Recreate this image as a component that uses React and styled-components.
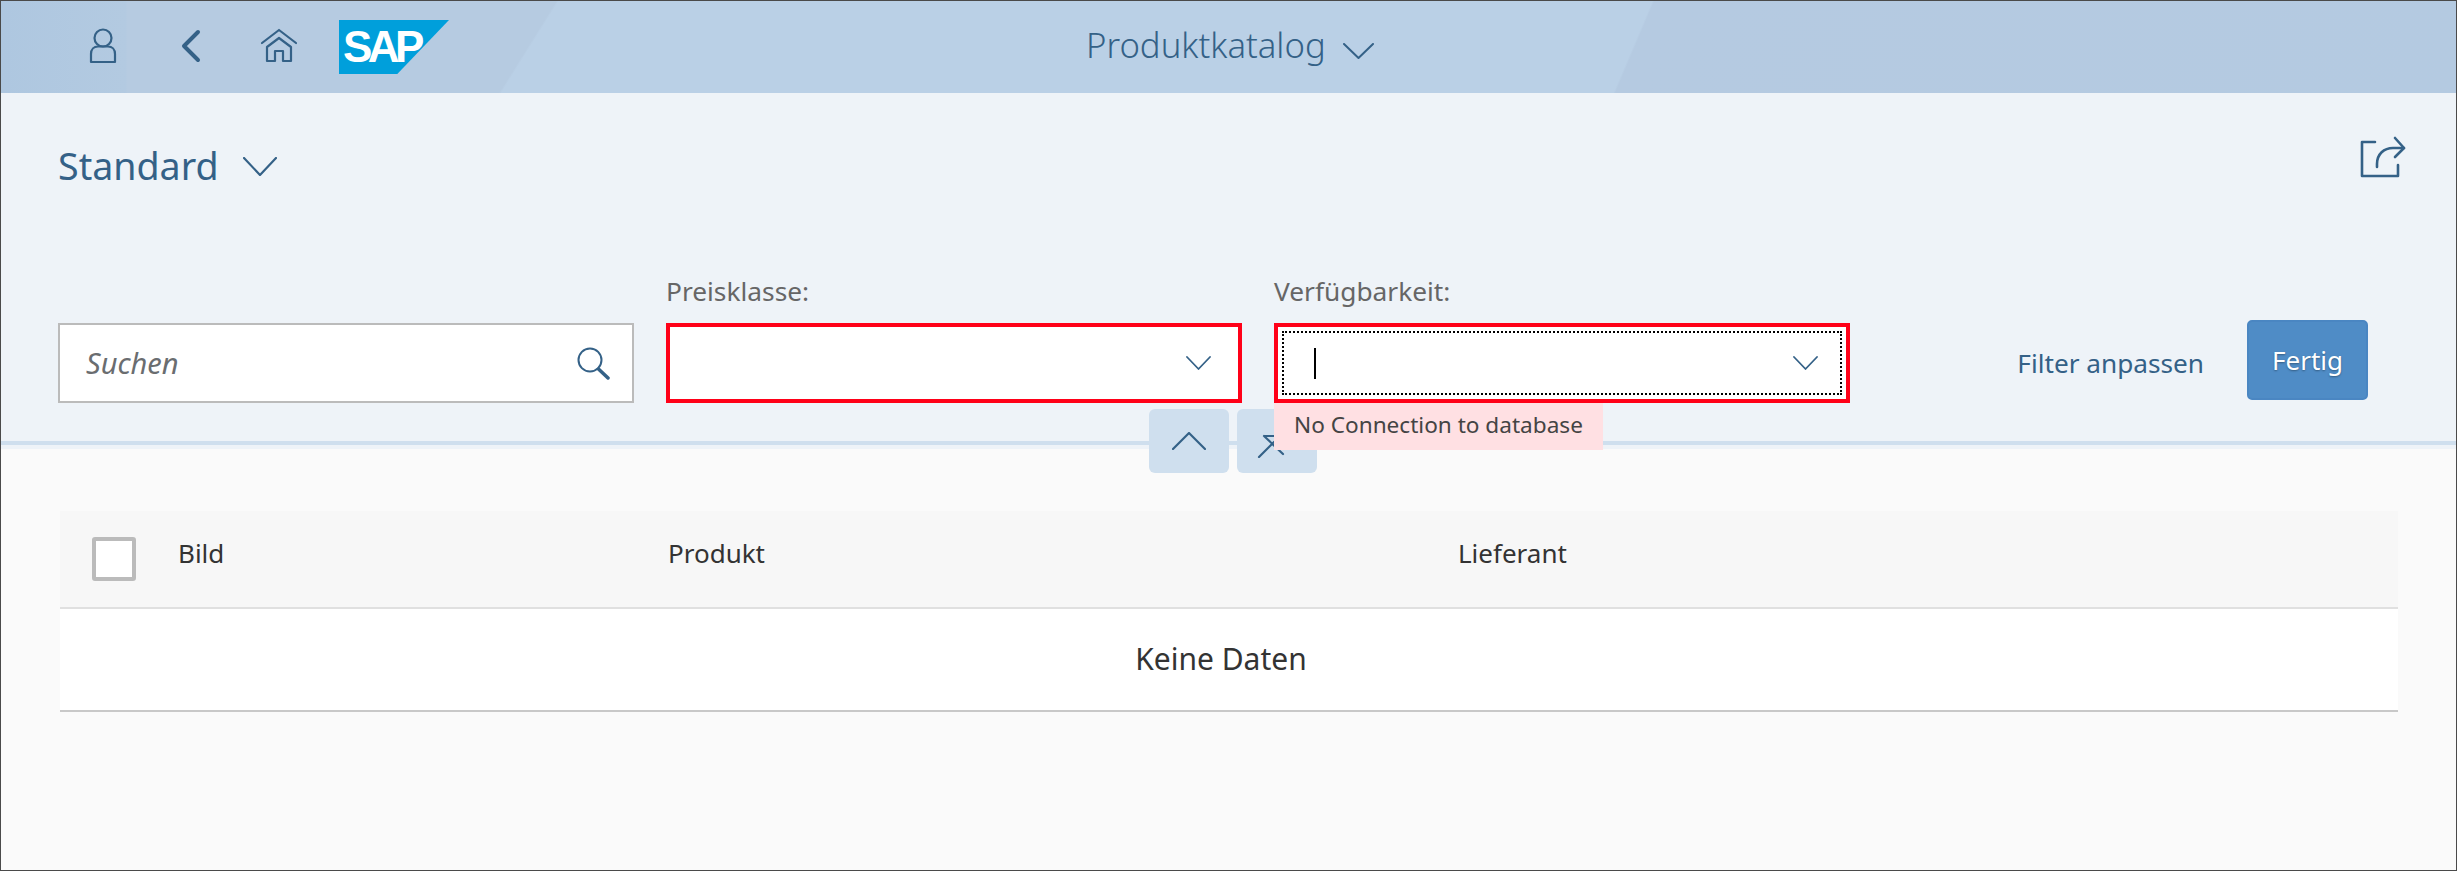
import React from 'react'
import styled, { createGlobalStyle } from 'styled-components'

const GlobalStyle = createGlobalStyle`
  html, body { margin: 0; padding: 0; background: #fafafa; }
  * { box-sizing: border-box; }
`

const Page = styled.div`
  width: 2457px;
  height: 871px;
  border: 1px solid #4a4a4a;
  background: #fafafa;
  font-family: "Noto Sans", "Open Sans", sans-serif;
  overflow: hidden;
  display: flex;
  flex-direction: column;
`

const Shell = styled.header`
  height: 92px;
  flex: none;
  position: relative;
  display: flex;
  align-items: center;
  padding-left: 87px;
  background:
    linear-gradient(90deg, #aec7e0 0, #b3cae1 125px, transparent 126px),
    linear-gradient(113deg, transparent 1520px, #b5cae1 1522px, #b4cae1 100%),
    linear-gradient(122deg, #b6cbe1 471px, #bad0e6 473px, #bad0e6 100%);
`

const ShellIcon = styled.svg`
  display: block;
  flex: none;
  fill: none;
  stroke: #346187;
  stroke-width: ${p => p.$weight || 2.2};
  stroke-linecap: round;
  stroke-linejoin: round;
  transform: ${p => (p.$up ? 'scaleY(-1)' : 'none')};
`

const ShellIcons = styled.div`
  display: flex;
  align-items: center;
  margin-top: -3px;
`

const BackIcon = styled(ShellIcon)`
  margin-left: 62px;
`

const HomeIcon = styled(ShellIcon)`
  margin-left: 58px;
`

const Logo = styled.div`
  width: 110px;
  height: 54px;
  margin-left: 41px;
  flex: none;
  background: #009fdb;
  clip-path: polygon(0 0, 100% 0, 53% 100%, 0 100%);
  color: #fff;
  font-family: "Liberation Sans", Arial, sans-serif;
  font-weight: 700;
  font-size: 44px;
  line-height: 54px;
  letter-spacing: -4.5px;
  padding-left: 4px;
`

const ShellTitle = styled.div`
  position: absolute;
  left: 1085px;
  top: 0;
  height: 92px;
  display: flex;
  align-items: center;
  gap: 17px;
  color: #346187;
  font-size: 34.7px;
  font-weight: 300;
  padding-bottom: 5px;
`

const TitleChevron = styled.span`
  display: block;
  margin-top: 12px;
`

const FilterBar = styled.section`
  position: relative;
  flex: none;
  height: 356px;
  background: #eef3f8;
  padding: 0 50px 0 57px;
  display: flex;
  flex-direction: column;
`

const FilterBarLine = styled.div`
  position: absolute;
  left: 0;
  right: 0;
  bottom: 4px;
  height: 4px;
  background: #cfdfee;
`

const VariantRow = styled.div`
  display: flex;
  align-items: flex-start;
  justify-content: space-between;
  height: 56px;
  margin-top: 43px;
`

const Variant = styled.div`
  display: flex;
  align-items: center;
  gap: 24px;
  color: #346187;
  font-size: 37.6px;
  line-height: 52px;
  font-weight: 400;
  margin-top: 4px;
`

const Fields = styled.div`
  display: flex;
  align-items: flex-end;
  margin-top: 84px;
`

const Field = styled.div`
  width: 576px;
  margin-right: 32px;
  flex: none;
  position: relative;
`

const FieldLabel = styled.label`
  display: block;
  color: #666;
  font-size: 26.3px;
  line-height: 32px;
  margin-bottom: 16px;
  margin-top: -1px;
`

const InputBox = styled.div`
  height: 80px;
  background: #fff;
  border: ${p => (p.$error ? '4px solid #ff0018' : '2px solid #bbb')};
  display: flex;
  align-items: center;
  justify-content: space-between;
  padding: 0 ${p => (p.$error ? '27px' : '22px')} 0 26px;
`

const Focus = styled.div`
  flex: 1;
  height: 64px;
  margin: 0 -23px 0 -22px;
  border: 2px dotted #000;
  display: flex;
  align-items: center;
  justify-content: space-between;
  padding: 0 22px 0 30px;
`

const Caret = styled.div`
  width: 2px;
  height: 31px;
  background: #000;
`

const Placeholder = styled.span`
  color: #6a6d70;
  font-style: italic;
  font-size: 29px;
  margin-top: -2px;
`

const Message = styled.div`
  position: absolute;
  left: 0;
  top: 100%;
  width: 329px;
  height: 47px;
  background: #ffe0e3;
  color: #444;
  font-size: 22.6px;
  line-height: 44px;
  padding-left: 20px;
  white-space: nowrap;
  z-index: 3;
`

const Actions = styled.div`
  flex: 1;
  height: 80px;
  display: flex;
  align-items: center;
  justify-content: flex-end;
  gap: 43px;
  margin-right: 38px;
`

const TextLink = styled.span`
  color: #346187;
  font-size: 26.2px;
`

const PrimaryButton = styled.button`
  width: 121px;
  height: 80px;
  margin-top: -6px;
  background: #4f8cc6;
  border: 2px solid #4a86c2;
  border-radius: 5px;
  color: #fff;
  font-family: inherit;
  font-size: 26px;
  text-shadow: 0 1px 2px rgba(0, 0, 0, .35);
`

const Collapse = styled.div`
  position: absolute;
  left: 1148px;
  top: 316px;
  display: flex;
  gap: 8px;
  z-index: 2;
`

const CollapseButton = styled.div`
  width: 80px;
  height: 64px;
  background: #cfdfee;
  border-radius: 6px;
  display: flex;
  align-items: center;
  justify-content: center;
`

const Content = styled.main`
  flex: 1;
  padding: 62px 58px 0 59px;
`

const HeaderRow = styled.div`
  height: 96px;
  background: #f7f7f7;
  display: flex;
  align-items: center;
  color: #333;
  font-size: 26px;
`

const HeaderRule = styled.div`
  height: 2px;
  background: #e0e0e0;
`

const SelectBox = styled.div`
  width: 44px;
  height: 44px;
  margin: 0 42px 0 32px;
  flex: none;
  background: #fff;
  border: 4px solid #bbb;
  border-radius: 3px;
`

const Column = styled.div`
  flex: none;
  width: ${p => p.$w}px;
  margin-top: -12px;
`

const NoData = styled.div`
  height: 103px;
  background: #fff;
  border-bottom: 2px solid #c8c8c8;
  display: flex;
  align-items: center;
  justify-content: center;
  color: #333;
  font-size: 30px;
  padding: 0 16px 3px 0;
`

const Chevron = ({ w, h, weight, up }) => (
  <ShellIcon width={w} height={h} viewBox={`0 0 ${w} ${h}`} $weight={weight} $up={up}>
    <path d={`M1 1L${w / 2} ${h - 1}L${w - 1} 1`} />
  </ShellIcon>
)

const App = () => {
  return (
    <Page>
      <GlobalStyle />
      <Shell>
        <ShellIcons>
          <ShellIcon width="30" height="36" viewBox="0 0 30 36">
            <circle cx="15" cy="10" r="8.5" />
            <path d="M3 34V26C3 21.5 6 18.5 10 18.5H20C24 18.5 27 21.5 27 26V34Z" />
          </ShellIcon>
          <BackIcon width="22" height="34" viewBox="0 0 22 34" $weight="4">
            <path d="M18 3L4 17L18 31" />
          </BackIcon>
          <HomeIcon width="38" height="36" viewBox="0 0 38 36">
            <path d="M2 15L19 2L36 15" />
            <path d="M7 19L19 10L31 19V33H23V23H15V33H7Z" />
          </HomeIcon>
        </ShellIcons>
        <Logo>SAP</Logo>
        <ShellTitle>
          Produktkatalog
          <TitleChevron>
            <Chevron w={31} h={16} weight={2} />
          </TitleChevron>
        </ShellTitle>
      </Shell>

      <FilterBar>
        <VariantRow>
          <Variant>
            Standard
            <Chevron w={34} h={19} />
          </Variant>
          <ShellIcon width="46" height="42" viewBox="0 0 46 42" $weight="2.6">
            <path d="M15 6H2V40H38V29" />
            <path d="M17 31V28C17 18 24 12 33 12H44" />
            <path d="M35 2L44 12L35 21" />
          </ShellIcon>
        </VariantRow>

        <Fields>
          <Field>
            <InputBox>
              <Placeholder>Suchen</Placeholder>
              <ShellIcon width="33" height="33" viewBox="0 0 33 33" $weight="2">
                <circle cx="13" cy="13" r="11.5" />
                <path d="M21.5 22L31 31" strokeWidth="3.5" />
              </ShellIcon>
            </InputBox>
          </Field>
          <Field>
            <FieldLabel>Preisklasse:</FieldLabel>
            <InputBox $error>
              <span />
              <Chevron w={25} h={14} weight={1.8} />
            </InputBox>
          </Field>
          <Field>
            <FieldLabel>Verfügbarkeit:</FieldLabel>
            <InputBox $error>
              <Focus>
                <Caret />
                <Chevron w={25} h={14} weight={1.8} />
              </Focus>
            </InputBox>
            <Message>No Connection to database</Message>
          </Field>
          <Actions>
            <TextLink>Filter anpassen</TextLink>
            <PrimaryButton>Fertig</PrimaryButton>
          </Actions>
        </Fields>

        <FilterBarLine />
        <Collapse>
          <CollapseButton>
            <Chevron w={34} h={18} up />
          </CollapseButton>
          <CollapseButton>
            <ShellIcon width="40" height="34" viewBox="0 0 40 34">
              <path d="M2 33L17 18M7 12H28M7 12L26 30" />
            </ShellIcon>
          </CollapseButton>
        </Collapse>
      </FilterBar>

      <Content>
        <HeaderRow>
          <SelectBox />
          <Column $w={490}>Bild</Column>
          <Column $w={790}>Produkt</Column>
          <Column $w={300}>Lieferant</Column>
        </HeaderRow>
        <HeaderRule />
        <NoData>Keine Daten</NoData>
      </Content>
    </Page>
  )
}

export default App
